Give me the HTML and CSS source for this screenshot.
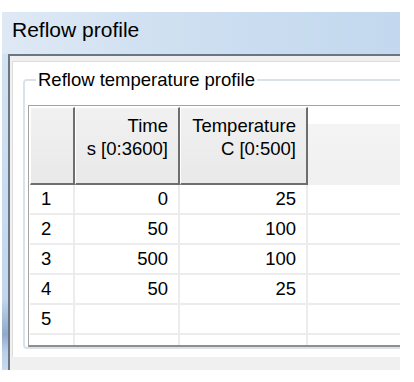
FILE: index.html
```html
<!DOCTYPE html>
<html>
<head>
    <title>Reflow profile</title>
    <link rel="stylesheet" href="styles.css">
</head>
<body>
    <div class="window">
        <div class="titlebar">Reflow profile</div>
        <div class="client">
            <div class="page">
                <fieldset class="group">
                    <legend>Reflow temperature profile</legend>
                    <div class="grid">
                        <div class="hcell"></div>
                        <div class="hcell">Time<br>s [0:3600]</div>
                        <div class="hcell">Temperature<br>C [0:500]</div>
                        <div class="hfill"></div>

                        <div class="cell num">1</div>
                        <div class="cell">0</div>
                        <div class="cell">25</div>
                        <div class="cell blank"></div>

                        <div class="cell num">2</div>
                        <div class="cell">50</div>
                        <div class="cell">100</div>
                        <div class="cell blank"></div>

                        <div class="cell num">3</div>
                        <div class="cell">500</div>
                        <div class="cell">100</div>
                        <div class="cell blank"></div>

                        <div class="cell num">4</div>
                        <div class="cell">50</div>
                        <div class="cell">25</div>
                        <div class="cell blank"></div>

                        <div class="cell num">5</div>
                        <div class="cell"></div>
                        <div class="cell"></div>
                        <div class="cell blank"></div>

                        <div class="cell last"></div>
                        <div class="cell last"></div>
                        <div class="cell last"></div>
                        <div class="cell last blank"></div>
                    </div>
                </fieldset>
            </div>
        </div>
    </div>
</body>
</html>
```

FILE: styles.css
```css
body {
    margin: 0;
    background-color: #fff;
    font-family: "Liberation Sans", Arial, sans-serif;
    color: #000;
}

.window {
    margin: 12px 0 0 2px;
    width: 398px;
    overflow: hidden;
    display: flex;
    flex-direction: column;
    background: linear-gradient(#d6e4f3, #c2d7ed 80%, #8fabcb 90%, #b9d0e9 95%, #c9dbee);
}

.titlebar {
    height: 42px;
    box-sizing: border-box;
    padding: 3px 0 0 10px;
    line-height: 30px;
    font-size: 21px;
    background: linear-gradient(to right, #dfe9f5, #cfe0f1 40%, #c3d8ee);
}

.client {
    margin-left: 6px;
    border-left: 2px solid #6b7583;
    border-top: 2px solid #6b7583;
    background-color: #f0f0f0;
    padding: 5px 0 13px 2px;
}

.page {
    background-color: #fff;
    border-top: 1px solid #dcdcdc;
    border-left: 1px solid #dcdcdc;
    padding: 0 0 8px 10px;
}

.group {
    margin: 7px 0 0 0;
    padding: 0 0 0 3px;
    width: 420px;
    min-width: 0;
    border: 2px solid #d9e2e8;
    border-radius: 4px;
}

.group legend {
    margin-left: 8px;
    padding: 0 2px;
    font-size: 18.5px;
    line-height: 22px;
}

.grid {
    margin-top: 14px;
    display: grid;
    grid-template-columns: 45px 105px 128px 1fr;
    grid-template-rows: 78px repeat(5, 30px) 10px;
    border-top: 1px solid #a3a3a3;
    border-left: 1px solid #a3a3a3;
    border-bottom: 2px solid #8e8e8e;
    padding: 1px 0 0 1px;
    font-size: 18.5px;
}

.hcell {
    box-sizing: border-box;
    background: linear-gradient(#f1f1f1, #e9e9e9);
    border-top: 1px solid #fff;
    border-left: 1px solid #fff;
    border-right: 2px solid #6e6e6e;
    border-bottom: 2px solid #6e6e6e;
    padding: 6px 10px 0 0;
    line-height: 23px;
    text-align: right;
}

.hfill {
    background: linear-gradient(#fff 0, #fff 17px, #f4f4f4 17px, #f0f0f0);
}

.cell {
    box-sizing: border-box;
    border-right: 2px solid #ececec;
    border-bottom: 2px solid #ececec;
    display: flex;
    align-items: center;
    justify-content: flex-end;
    padding-right: 10px;
}

.cell.num {
    justify-content: flex-start;
    padding-left: 11px;
}

.cell.blank {
    border-right: none;
}

.cell.last {
    border-bottom: none;
}
```
